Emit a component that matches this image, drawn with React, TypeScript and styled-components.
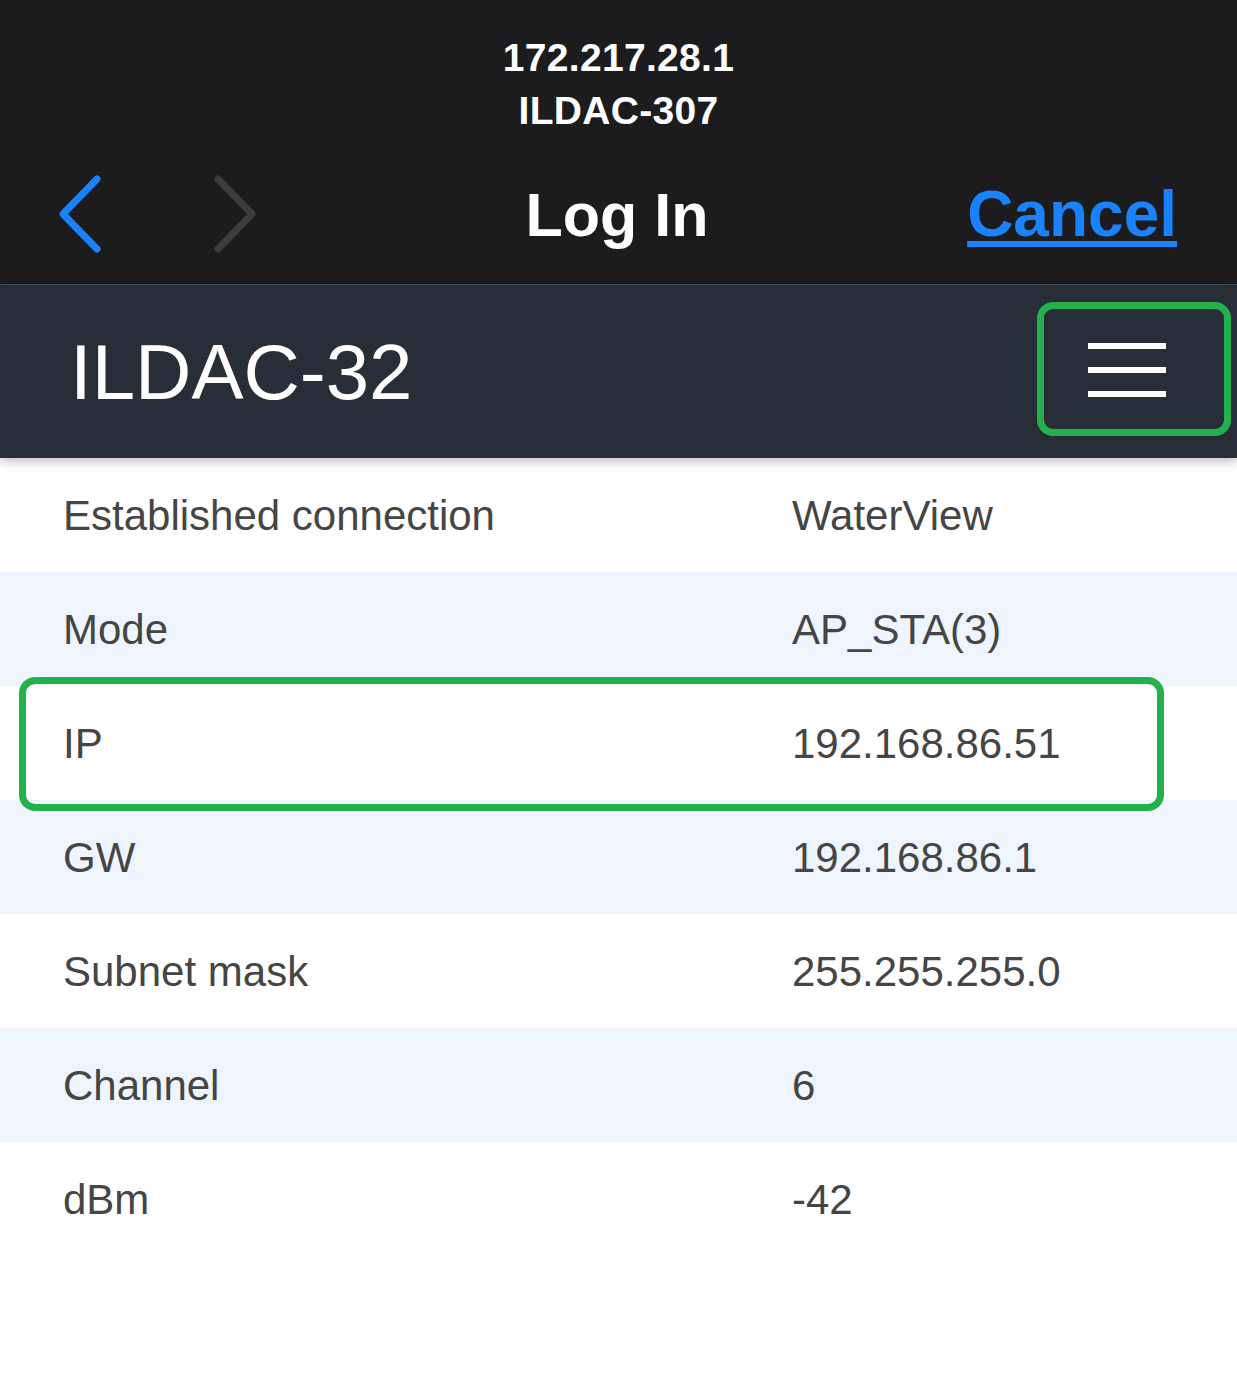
import React, {FC} from "react";
import styled, {createGlobalStyle} from "styled-components";

const GlobalStyle = createGlobalStyle`
    html, body {
        margin: 0;
        padding: 0;
        background: #ffffff;
    }
    body {
        font-family: "Liberation Sans", Arial, sans-serif;
    }
`;

const Page = styled.div`
    width: 1237px;
    min-height: 1393px;
    background: #ffffff;
`;

const TopBar = styled.div`
    background: #1c1c1e;
    height: 284px;
    display: flex;
    flex-direction: column;
`;

const Address = styled.div`
    padding-top: 31px;
    display: flex;
    flex-direction: column;
    align-items: center;
    color: #ffffff;
    font-weight: 700;
    font-size: 39px;
    line-height: 53px;
    letter-spacing: 0.3px;
`;

const NavRow = styled.div`
    margin-top: 7px;
    height: 140px;
    display: grid;
    grid-template-columns: 1fr auto 1fr;
    align-items: center;
    padding: 0 60px 0 57px;
`;

const Arrows = styled.div`
    display: flex;
    align-items: center;
    gap: 109px;
`;

const NavTitle = styled.div`
    color: #ffffff;
    font-weight: 700;
    font-size: 61px;
    line-height: 1;
    padding-top: 2px;
`;

const CancelLink = styled.a`
    justify-self: end;
    color: #1a82fb;
    font-weight: 700;
    font-size: 64px;
    line-height: 1;
    text-decoration: underline;
    text-decoration-thickness: 6px;
    text-underline-offset: 5px;
    cursor: pointer;
`;

const Divider = styled.div`
    height: 1px;
    background: #3f474e;
`;

const Header = styled.div`
    position: relative;
    z-index: 2;
    height: 173px;
    background: #272e37;
    display: flex;
    align-items: center;
    justify-content: space-between;
    padding: 0 6px 0 70px;
    box-shadow: 0 3px 10px rgba(0, 0, 0, 0.28);
`;

const DeviceName = styled.h1`
    margin: 0;
    color: #ffffff;
    font-weight: 400;
    font-size: 78px;
    line-height: 1;
`;

const MenuButton = styled.button`
    box-sizing: border-box;
    width: 194px;
    height: 134px;
    margin-top: -5px;
    border: 7px solid #22b14c;
    border-radius: 16px;
    background: transparent;
    display: flex;
    flex-direction: column;
    align-items: center;
    justify-content: center;
    gap: 18px;
    padding: 2px 14px 0 0;
    cursor: pointer;
`;

const Bar = styled.span`
    display: block;
    width: 78px;
    height: 6px;
    background: #ffffff;
`;

const Table = styled.div`
    display: flex;
    flex-direction: column;
`;

const Row = styled.div<{ $shaded: boolean; $highlight: boolean }>`
    position: relative;
    height: 114px;
    display: grid;
    grid-template-columns: 729px 1fr;
    align-items: center;
    padding-left: 63px;
    background: ${p => (p.$shaded ? "#eef5fd" : "#ffffff")};
    color: #454545;
    font-size: 42px;

    ${p => p.$highlight && `
        &::after {
            content: "";
            position: absolute;
            left: 19px;
            top: -9px;
            width: 1145px;
            height: 134px;
            box-sizing: border-box;
            border: 7px solid #22b14c;
            border-radius: 16px;
            z-index: 1;
            pointer-events: none;
        }
    `}
`;

const Cell = styled.span`
    line-height: 1;
    padding-top: 2px;
`;

const Chevron: FC<{ dir: "left" | "right"; color: string }> = ({dir, color}) => (
    <svg width="46" height="78" viewBox="0 0 46 78">
        <path
            d={dir === "left" ? "M40 4 L6 39 L40 74" : "M6 4 L40 39 L6 74"}
            fill="none"
            stroke={color}
            strokeWidth="7"
            strokeLinecap="round"
            strokeLinejoin="round"
        />
    </svg>
);

const rows: [string, string][] = [
    ["Established connection", "WaterView"],
    ["Mode", "AP_STA(3)"],
    ["IP", "192.168.86.51"],
    ["GW", "192.168.86.1"],
    ["Subnet mask", "255.255.255.0"],
    ["Channel", "6"],
    ["dBm", "-42"],
];

const App: FC = () => (
    <Page>
        <GlobalStyle/>
        <TopBar>
            <Address>
                <span>172.217.28.1</span>
                <span>ILDAC-307</span>
            </Address>
            <NavRow>
                <Arrows>
                    <Chevron dir="left" color="#1a82fb"/>
                    <Chevron dir="right" color="#3d3d40"/>
                </Arrows>
                <NavTitle>Log In</NavTitle>
                <CancelLink>Cancel</CancelLink>
            </NavRow>
        </TopBar>
        <Divider/>
        <Header>
            <DeviceName>ILDAC-32</DeviceName>
            <MenuButton aria-label="Menu">
                <Bar/>
                <Bar/>
                <Bar/>
            </MenuButton>
        </Header>
        <Table>
            {rows.map(([label, value], i) => (
                <Row key={label} $shaded={i % 2 === 1} $highlight={label === "IP"}>
                    <Cell>{label}</Cell>
                    <Cell>{value}</Cell>
                </Row>
            ))}
        </Table>
    </Page>
);

export default App;
